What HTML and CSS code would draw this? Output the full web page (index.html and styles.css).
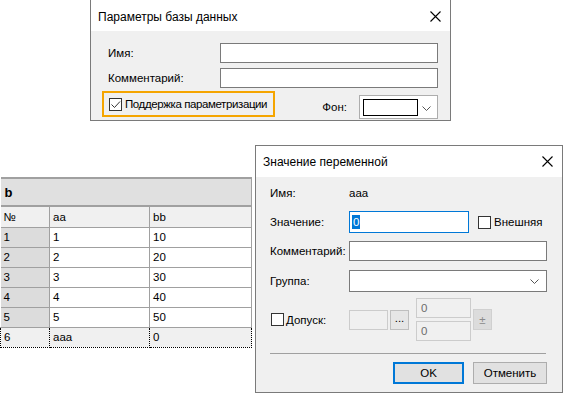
FILE: index.html
```html
<!DOCTYPE html>
<html lang="ru">
<head>
  <meta charset="UTF-8">
  <title>Параметры базы данных</title>
  <link rel="stylesheet" href="styles.css">
</head>
<body>
  <div class="desk">

    <section class="dlg dlg-db">
      <header class="dlg-title">
        <span>Параметры базы данных</span>
        <svg class="close" width="11" height="11" viewBox="0 0 11 11"><path d="M0.5 0.5L10.5 10.5M10.5 0.5L0.5 10.5" stroke="#000" stroke-width="1.1" fill="none"/></svg>
      </header>
      <div class="db-body">
        <div class="db-row"><label>Имя:</label><div class="edit"></div></div>
        <div class="db-row"><label>Комментарий:</label><div class="edit"></div></div>
        <div class="db-bottom">
          <div class="focus-box">
            <span class="check"><svg width="11" height="11" viewBox="0 0 11 11"><path d="M1.5 5.5L4.5 8.5L10 2.5" stroke="#333" stroke-width="1" fill="none"/></svg></span>
            <span class="focus-text">Поддержка параметризации</span>
          </div>
          <div class="bg-field">
            <label>Фон:</label>
            <div class="color-combo">
              <span class="swatch"></span>
              <svg width="9" height="5" viewBox="0 0 9 5"><path d="M0.5 0.5L4.5 4.5L8.5 0.5" stroke="#555" fill="none"/></svg>
            </div>
          </div>
        </div>
      </div>
    </section>

    <div class="grid-panel">
      <table class="grid">
        <colgroup><col class="c1"><col class="c2"><col class="c3"></colgroup>
        <tr class="caption"><td colspan="3">b</td></tr>
        <tr class="head"><td>№</td><td>aa</td><td>bb</td></tr>
        <tr><td class="num">1</td><td>1</td><td>10</td></tr>
        <tr><td class="num">2</td><td>2</td><td>20</td></tr>
        <tr><td class="num">3</td><td>3</td><td>30</td></tr>
        <tr><td class="num">4</td><td>4</td><td>40</td></tr>
        <tr><td class="num">5</td><td>5</td><td>50</td></tr>
        <tr class="current"><td>6</td><td>aaa</td><td>0</td></tr>
      </table>
    </div>

    <section class="dlg dlg-var">
      <header class="dlg-title">
        <span>Значение переменной</span>
        <svg class="close" width="11" height="11" viewBox="0 0 11 11"><path d="M0.5 0.5L10.5 10.5M10.5 0.5L0.5 10.5" stroke="#000" stroke-width="1.1" fill="none"/></svg>
      </header>
      <div class="var-body">
        <div class="var-row row-name"><label>Имя:</label><span>aaa</span></div>
        <div class="var-row row-value">
          <label>Значение:</label>
          <div class="value-line">
            <div class="edit edit-value"><span class="sel">0</span></div>
            <span class="check"></span><span class="check-text">Внешняя</span>
          </div>
        </div>
        <div class="var-row row-comment"><label>Комментарий:</label><div class="edit"></div></div>
        <div class="var-row row-group">
          <label>Группа:</label>
          <div class="edit combo">
            <svg width="9" height="5" viewBox="0 0 9 5"><path d="M0.5 0.5L4.5 4.5L8.5 0.5" stroke="#555" fill="none"/></svg>
          </div>
        </div>
        <div class="var-row row-tol">
          <label class="tol-label"><span class="check"></span>Допуск:</label>
          <div class="tol-controls">
            <div class="edit off small"></div>
            <div class="btn off-btn dots">...</div>
            <div class="tol-stack">
              <div class="edit off">0</div>
              <div class="edit off">0</div>
            </div>
            <div class="btn off-btn pm">±</div>
          </div>
        </div>
        <div class="sep"></div>
        <div class="actions">
          <div class="btn default">OK</div>
          <div class="btn cancel">Отменить</div>
        </div>
      </div>
    </section>

  </div>
</body>
</html>
```

FILE: styles.css
```css
* { box-sizing: border-box; }
body { margin: 0; background: #fff; font-family: "Liberation Sans", Arial, sans-serif; font-size: 11.5px; color: #000; }
.desk { position: relative; width: 563px; height: 398px; overflow: hidden; }

/* windows */
.dlg { position: absolute; border: 1px solid #7a7a7a; background: #f0f0f0; display: flex; flex-direction: column; }
.dlg-title { display: flex; align-items: center; justify-content: space-between; background: #fff; padding: 0 9px 0 7px; font-size: 12px; }
.dlg-title .close { flex: none; }

.edit { height: 20px; border: 1px solid #7a7a7a; background: #fff; }

.check { display: inline-block; flex: none; width: 13px; height: 13px; border: 1px solid #333; background: #fff; }
.check svg { display: block; margin: 0; }

/* database parameters */
.dlg-db { left: 90px; top: -1px; width: 361px; height: 122px; }
.dlg-db .dlg-title { height: 31px; padding-top: 2px; }
.db-body { padding: 12px 12px 0 17px; }
.db-row { display: grid; grid-template-columns: 112px 1fr; align-items: center; margin-bottom: 5px; }
.db-row + .db-row { margin-bottom: 3px; }
.db-bottom { display: flex; justify-content: space-between; align-items: flex-start; }
.focus-box { display: flex; align-items: center; gap: 3px; margin-left: -6px; width: 173px; height: 26px; border: 2px solid #f5a500; padding-left: 5px; white-space: nowrap; overflow: hidden; }
.focus-text { font-size: 11.5px; letter-spacing: -0.4px; }
.bg-field { display: flex; align-items: center; margin-top: 4px; }
.bg-field label { margin-right: 12px; }
.color-combo { display: flex; align-items: center; justify-content: space-between; width: 79px; height: 24px; border: 1px solid #adadad; background: #fff; padding: 2px 6px 0 3px; }
.swatch { width: 55px; height: 17px; border: 1px solid #000; margin-top: -2px; }

/* table */
.grid-panel { position: absolute; left: 0; top: 177px; width: 251px; }
.grid { border-collapse: collapse; width: 251px; table-layout: fixed; }
.grid .c1 { width: 49px; }
.grid .c2 { width: 100px; }
.grid .c3 { width: 102px; }
.grid td { height: 20px; padding: 0 0 0 3px; border: 1px solid #a0a0a0; border-top: 0; background: #fff; white-space: nowrap; }
.grid td:first-child { border-left: 0; }
.grid .caption td { height: 28px; background: #e0e0e0; border-top: 2px solid #a0a0a0; border-bottom: 2px solid #a0a0a0; font-weight: bold; font-size: 13px; padding-left: 4px; }
.grid .head td { height: 21px; background: #f0f0f0; }
.grid .num { background: #dcdcdc; }
.grid .current td { background: #f0f0f0; border: 1px dotted #000; border-left: 0; }
.grid .current td:first-child { border-left: 1px dotted #000; }

/* variable value */
.dlg-var { left: 255px; top: 145px; width: 308px; height: 248px; }
.dlg-var .dlg-title { height: 31px; }
.var-body { padding: 8px 15px 8px 14px; }
.var-row { display: grid; grid-template-columns: 79px 1fr; align-items: center; }
.row-name { height: 16px; }
.row-value { margin-top: 10px; }
.row-comment { margin-top: 8px; }
.row-group { margin-top: 9px; }
.row-tol { margin-top: 6px; }

.value-line { display: flex; align-items: center; }
.edit-value { width: 120px; height: 22px; border-color: #0078d7; padding: 3px 0 0 2px; margin-right: 9px; }
.sel { display: inline-block; background: #0078d7; color: #fff; padding: 0 1px; line-height: 14px; }
.check-text { margin-left: 3px; }

.row-group .edit { height: 22px; }
.combo { display: flex; align-items: center; justify-content: flex-end; padding-right: 7px; }

.tol-label { display: flex; align-items: center; gap: 2px; padding-left: 1px; }
.tol-controls { display: flex; align-items: center; }
.edit.off { border-color: #cccccc; background: #f0f0f0; color: #6d6d6d; padding: 3px 0 0 4px; }
.edit.small { width: 39px; }
.tol-stack { display: flex; flex-direction: column; gap: 3px; width: 55px; margin: 0 2px 0 7px; }

.btn { display: flex; align-items: center; justify-content: center; height: 22px; border: 1px solid #adadad; background: #e1e1e1; }
.off-btn { width: 19px; height: 20px; border-color: #bfbfbf; background: #e6e6e6; color: #000; }
.dots { margin-left: 2px; padding-bottom: 4px; }
.pm { height: 21px; color: #8a8a8a; border-color: #d0d0d0; background: #dcdcdc; }

.sep { height: 1px; background: #a0a0a0; margin: 12px 1px 8px 0; }
.actions { display: flex; justify-content: flex-end; gap: 9px; }
.default { width: 71px; border: 2px solid #0078d7; }
.cancel { width: 74px; }
```
